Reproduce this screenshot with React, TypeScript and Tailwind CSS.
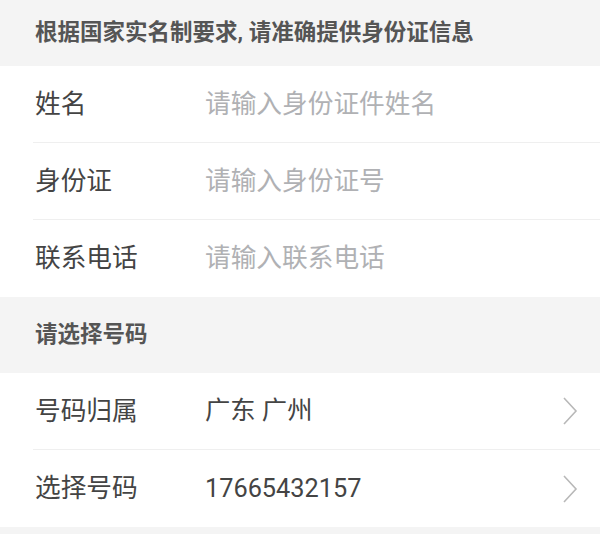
const FONT = "font-['Roboto','Noto_Sans_CJK_SC',sans-serif]";

type Row = { label: string; value: string; placeholder?: boolean; arrow?: boolean };

function Chevron() {
  return (
    <svg width="16" height="30" viewBox="0 0 16 30" className="mr-[22px] shrink-0">
      <path d="M2 2 L14 15 L2 28" fill="none" stroke="#b8b8b8" strokeWidth="1.6" />
    </svg>
  );
}

function FieldRows({ rows }: { rows: Row[] }) {
  return (
    <div className="bg-white pl-[33px]">
      {rows.map((row, i) => (
        <div
          key={row.label}
          className={`flex h-[77px] items-center ${i < rows.length - 1 ? "border-b border-[#efefef]" : ""}`}
        >
          <span className="w-[172px] shrink-0 pl-[2px] text-[25.7px] text-[#444]">{row.label}</span>
          <span
            className={`flex-1 ${
              row.placeholder ? "text-[25.7px] text-[#b0b1b4]" : "text-[25.3px] text-[#444]"
            }`}
          >
            {row.value}
          </span>
          {row.arrow && <Chevron />}
        </div>
      ))}
    </div>
  );
}

export default function App() {
  return (
    <div className={`h-[534px] w-[600px] overflow-hidden bg-[#f4f4f4] ${FONT}`}>
      <div className="flex h-[66px] items-center pl-[35px] text-[22.5px] font-bold text-[#555]">
        根据国家实名制要求, 请准确提供身份证信息
      </div>
      <FieldRows
        rows={[
          { label: "姓名", value: "请输入身份证件姓名", placeholder: true },
          { label: "身份证", value: "请输入身份证号", placeholder: true },
          { label: "联系电话", value: "请输入联系电话", placeholder: true },
        ]}
      />
      <div className="flex h-[76px] items-center pl-[35px] text-[22.5px] font-bold text-[#555]">请选择号码</div>
      <FieldRows
        rows={[
          { label: "号码归属", value: "广东 广州", arrow: true },
          { label: "选择号码", value: "17665432157", arrow: true },
        ]}
      />
    </div>
  );
}
